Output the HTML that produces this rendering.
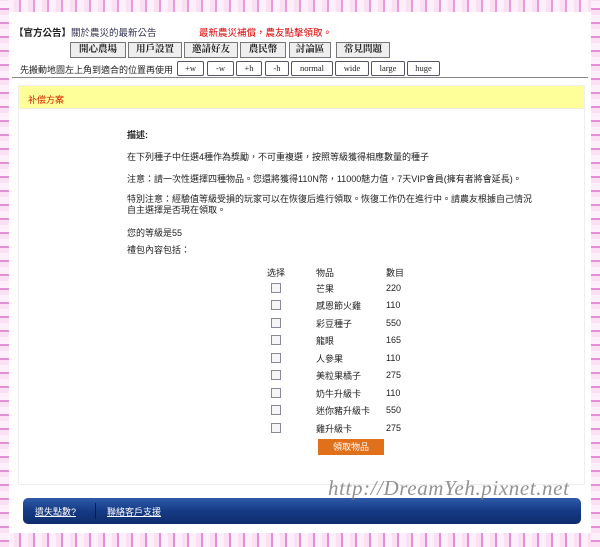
<!DOCTYPE html>
<html><head><meta charset="utf-8"><style>
*{margin:0;padding:0;box-sizing:border-box}
body{width:600px;height:547px;background:#fff;position:relative;overflow:hidden;font-family:"Liberation Sans","Noto Sans CJK TC",sans-serif;font-size:9px;color:#222}
.a{position:absolute;white-space:nowrap}
.bt{position:absolute;top:0;left:0;width:600px;height:12px;background:repeating-linear-gradient(90deg,#fbe0f4 0 5px,#e89ad9 5px 7px,#fdf0fa 7px 14px)}
.bb{position:absolute;bottom:0;left:0;width:600px;height:14px;background:repeating-linear-gradient(90deg,#fbe0f4 0 5px,#e38fd5 5px 7px,#fdf0fa 7px 14px)}
.bl{position:absolute;top:0;left:0;width:9px;height:547px;background:repeating-linear-gradient(0deg,#fbe0f4 0 5px,#e38fd5 5px 7px,#fdf0fa 7px 14px)}
.br{position:absolute;top:0;right:0;width:9px;height:547px;background:repeating-linear-gradient(0deg,#fbe0f4 0 5px,#e38fd5 5px 7px,#fdf0fa 7px 14px)}
.tab{position:absolute;top:42px;height:16px;border:1px solid #777;background:#eee;font-weight:bold;font-size:9.5px;text-align:center;line-height:14px;font-family:"Liberation Serif","Noto Serif CJK SC",serif}
.sb{position:absolute;top:61px;height:15px;border:1px solid #556;border-radius:2px;background:#fff;font-size:8.5px;text-align:center;line-height:13px;font-family:"Liberation Serif",serif}
.cb{position:absolute;left:271px;width:10px;height:10px;border:1px solid #889;background:#f6f6f6}
</style></head><body>
<div class="bt"></div><div class="bb"></div><div class="bl"></div><div class="br"></div>
<div class="a" style="left:14px;top:25px;font-size:9.5px;font-weight:bold">【官方公告】<span style="font-weight:normal;color:#335">關於農災的最新公告</span></div>
<div class="a" style="left:199px;top:25px;color:#d00;font-size:9.5px">最新農災補償，農友點擊領取。</div>
<div class="tab" style="left:70px;width:56px">開心農場</div>
<div class="tab" style="left:128px;width:54px">用戶設置</div>
<div class="tab" style="left:184px;width:54px">邀請好友</div>
<div class="tab" style="left:240px;width:46px">農民幣</div>
<div class="tab" style="left:289px;width:42px">討論區</div>
<div class="tab" style="left:336px;width:54px">常見問題</div>
<div class="a" style="left:20px;top:63px;font-size:9px">先搬動地圖左上角到適合的位置再使用</div>
<div class="sb" style="left:177px;width:27px">+w</div>
<div class="sb" style="left:207px;width:27px">-w</div>
<div class="sb" style="left:236px;width:26px">+h</div>
<div class="sb" style="left:265px;width:24px">-h</div>
<div class="sb" style="left:291px;width:42px">normal</div>
<div class="sb" style="left:335px;width:34px">wide</div>
<div class="sb" style="left:371px;width:34px">large</div>
<div class="sb" style="left:407px;width:33px">huge</div>
<div class="a" style="left:12px;top:77px;width:576px;height:1px;background:#888"></div>
<div class="a" style="left:18px;top:85px;width:567px;height:400px;border:1px solid #eee"></div>
<div class="a" style="left:19px;top:86px;width:565px;height:23px;background:#ffff99;border-bottom:1px solid #eed"></div>
<div class="a" style="left:28px;top:93px;color:#d42000;font-size:9px">补偿方案</div>
<div class="a" style="left:127px;top:128px;font-weight:bold">描述:</div>
<div class="a" style="left:127px;top:150px">在下列種子中任選4種作為獎勵，不可重複選，按照等級獲得相應數量的種子</div>
<div class="a" style="left:127px;top:172px">注意：請一次性選擇四種物品。您還將獲得110N幣，11000魅力值，7天VIP會員(擁有者將會延長)。</div>
<div class="a" style="left:127px;top:194px;line-height:11px">特別注意：經驗值等級受損的玩家可以在恢復后進行領取。恢復工作仍在進行中。請農友根據自己情況<br>自主選擇是否現在領取。</div>
<div class="a" style="left:127px;top:226px">您的等級是55</div>
<div class="a" style="left:127px;top:243px">禮包內容包括：</div>
<div class="a" style="left:267px;top:266px">选择</div><div class="a" style="left:316px;top:266px">物品</div><div class="a" style="left:386px;top:266px">數目</div>
<div class="cb" style="top:283px"></div><div class="a" style="left:316px;top:282px">芒果</div><div class="a" style="left:386px;top:283px">220</div>
<div class="cb" style="top:300px"></div><div class="a" style="left:316px;top:299px">感恩節火雞</div><div class="a" style="left:386px;top:300px">110</div>
<div class="cb" style="top:318px"></div><div class="a" style="left:316px;top:317px">彩豆種子</div><div class="a" style="left:386px;top:318px">550</div>
<div class="cb" style="top:335px"></div><div class="a" style="left:316px;top:334px">龍眼</div><div class="a" style="left:386px;top:335px">165</div>
<div class="cb" style="top:353px"></div><div class="a" style="left:316px;top:352px">人參果</div><div class="a" style="left:386px;top:353px">110</div>
<div class="cb" style="top:370px"></div><div class="a" style="left:316px;top:369px">美粒果橘子</div><div class="a" style="left:386px;top:370px">275</div>
<div class="cb" style="top:388px"></div><div class="a" style="left:316px;top:387px">奶牛升級卡</div><div class="a" style="left:386px;top:388px">110</div>
<div class="cb" style="top:405px"></div><div class="a" style="left:316px;top:404px">迷你豬升級卡</div><div class="a" style="left:386px;top:405px">550</div>
<div class="cb" style="top:423px"></div><div class="a" style="left:316px;top:422px">雞升級卡</div><div class="a" style="left:386px;top:423px">275</div>
<div class="a" style="left:318px;top:439px;width:66px;height:16px;background:#e0701a;color:#fff;text-align:center;line-height:16px">領取物品</div>
<div class="a" style="left:23px;top:498px;width:558px;height:26px;border-radius:5px;background:linear-gradient(#2d5aa8,#163a85 50%,#0f2c6c)"></div>
<div class="a" style="left:95px;top:503px;width:1px;height:16px;background:#0a1a44"></div>
<div class="a" style="left:35px;top:505px;color:#fff;text-decoration:underline">遺失點數?</div>
<div class="a" style="left:107px;top:505px;color:#fff;text-decoration:underline">聯絡客戶支援</div>
<div class="a" style="left:328px;top:476px;font-family:'Liberation Serif',serif;font-style:italic;font-size:21px;letter-spacing:0.6px;color:#777;opacity:.8">http://DreamYeh.pixnet.net</div>
</body></html>
